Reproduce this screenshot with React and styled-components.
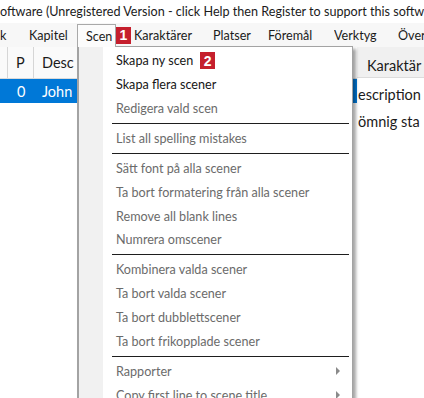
import React from "react";
import styled, { createGlobalStyle } from "styled-components";

const Global = createGlobalStyle`
  html, body { margin: 0; padding: 0; background: #fff; }
  body { width: 424px; height: 398px; overflow: hidden; font-family: Lato, "Noto Sans", sans-serif; }
`;

const Window = styled.div`
  width: 424px;
  height: 398px;
  display: flex;
  flex-direction: column;
  overflow: hidden;
  background: #fff;
`;

const TitleBar = styled.div`
  height: 23px;
  display: flex;
  align-items: center;
  font-size: 12.6px;
  color: #1b1b1b;
  white-space: nowrap;
  overflow: hidden;
  background: #fff;
`;

const MenuBar = styled.div`
  height: 24px;
  display: flex;
  align-items: stretch;
  background: #f7f7f7;
  font-size: 12.6px;
  color: #1b1b1b;
  white-space: nowrap;
`;

const BarItem = styled.div`
  flex: none;
  width: ${(p) => p.$w}px;
  padding-left: ${(p) => p.$pl || 0}px;
  box-sizing: border-box;
  display: flex;
  align-items: center;
  overflow: hidden;
`;

const OpenTab = styled(BarItem)`
  background: #fcfcfc;
  border: 1px solid #a9a9a9;
  border-bottom: none;
  margin-top: 1px;
  position: relative;
  z-index: 3;
`;

const Badge = styled.div`
  flex: none;
  width: 15px;
  height: 17px;
  background: #c51f2d;
  color: #fff;
  font-family: "Liberation Sans", Arial, sans-serif;
  font-weight: bold;
  font-size: 14px;
  display: flex;
  align-items: center;
  justify-content: center;
  align-self: center;
  margin-left: ${(p) => p.$ml || 0}px;
`;

const Body = styled.div`
  flex: 1;
  display: flex;
  position: relative;
`;

const LeftPane = styled.div`
  width: 357px;
  flex: none;
  display: flex;
  flex-direction: column;
`;

const GridRow = styled.div`
  display: flex;
  height: ${(p) => p.$h}px;
  background: ${(p) => p.$bg};
  color: ${(p) => p.$fg};
  font-size: 14.5px;
  border-bottom: ${(p) => (p.$line ? "1px solid #dadada" : "none")};
`;

const Cell = styled.div`
  flex: none;
  width: ${(p) => p.$w}px;
  box-sizing: border-box;
  padding-left: ${(p) => p.$pl || 0}px;
  display: flex;
  align-items: center;
  border-right: ${(p) => (p.$sep ? "1px solid #d6d6d6" : "none")};
  white-space: nowrap;
  overflow: hidden;
`;

const RightPane = styled.div`
  flex: 1;
  display: flex;
  flex-direction: column;
  font-size: 14.5px;
  color: #1b1b1b;
  white-space: nowrap;
  overflow: hidden;
`;

const PaneHeader = styled.div`
  height: 31px;
  box-sizing: border-box;
  padding-top: 6px;
  background: #f0f0f0;
  display: flex;
  align-items: center;
  padding-left: 10px;
  border-bottom: 1px solid #dcdcdc;
`;

const PaneLine = styled.div`
  height: 27px;
  display: flex;
  align-items: center;
  margin-left: ${(p) => p.$ml || 0}px;
  margin-top: ${(p) => p.$mt || 0}px;
`;

const Dropdown = styled.div`
  position: absolute;
  left: 77px;
  top: -1px;
  width: 276px;
  height: 400px;
  box-sizing: border-box;
  border-left: 2px solid #a3a3a3;
  border-right: 1px solid #a3a3a3;
  background: linear-gradient(to right, #f1f1f1 0, #f1f1f1 24px, #fff 24px);
  box-shadow: 3px 3px 3px rgba(0, 0, 0, 0.35);
  padding-top: 3px;
  display: flex;
  flex-direction: column;
  z-index: 2;
  font-size: 12.6px;
  &::before {
    content: "";
    position: absolute;
    top: 0;
    left: 37px;
    right: 0;
    border-top: 1px solid #a3a3a3;
  }
`;

const Item = styled.div`
  height: 23.8px;
  flex: none;
  display: flex;
  align-items: center;
  padding-left: 37px;
  padding-right: 12px;
  color: ${(p) => (p.$disabled ? "#6b6b6b" : "#161616")};
  white-space: nowrap;
`;

const Arrow = styled.span`
  margin-left: auto;
  width: 0;
  height: 0;
  border-top: 4px solid transparent;
  border-bottom: 4px solid transparent;
  border-left: 4px solid #8a8a8a;
`;

const Separator = styled.div`
  height: 6.2px;
  flex: none;
  display: flex;
  align-items: center;
  padding-left: 33px;
  padding-right: 3px;
  &::after {
    content: "";
    flex: 1;
    border-top: 1px solid #1e1e1e;
  }
`;

const menu = [
  { t: "Skapa ny scen", badge: "2" },
  { t: "Skapa flera scener" },
  { t: "Redigera vald scen", d: true },
  "sep",
  { t: "List all spelling mistakes", d: true },
  "sep",
  { t: "Sätt font på alla scener", d: true },
  { t: "Ta bort formatering från alla scener", d: true },
  { t: "Remove all blank lines", d: true },
  { t: "Numrera omscener", d: true },
  "sep",
  { t: "Kombinera valda scener", d: true },
  { t: "Ta bort valda scener", d: true },
  { t: "Ta bort dubblettscener", d: true },
  { t: "Ta bort frikopplade scener", d: true },
  "sep",
  { t: "Rapporter", d: true, sub: true },
  { t: "Copy first line to scene title", d: true, sub: true },
];

export default function App() {
  return (
    <Window>
      <Global />
      <TitleBar>oftware (Unregistered Version - click Help then Register to support this softw</TitleBar>
      <MenuBar>
        <BarItem $w={29}>k</BarItem>
        <BarItem $w={48}>Kapitel</BarItem>
        <OpenTab $w={39} $pl={8}>Scen</OpenTab>
        <Badge>1</Badge>
        <BarItem $w={82} $pl={3}>Karaktärer</BarItem>
        <BarItem $w={55}>Platser</BarItem>
        <BarItem $w={66}>Föremål</BarItem>
        <BarItem $w={64}>Verktyg</BarItem>
        <BarItem $w={26}>Över</BarItem>
      </MenuBar>
      <Body>
        <LeftPane>
          <GridRow $h={31} $bg="#fafafa" $fg="#1b1b1b" $line>
            <Cell $w={8} $sep />
            <Cell $w={26} $pl={8} $sep>P</Cell>
            <Cell $w={323} $pl={8}>Desc</Cell>
          </GridRow>
          <GridRow $h={24} $bg="#0078d7" $fg="#fff">
            <Cell $w={8} />
            <Cell $w={26} $pl={9}>0</Cell>
            <Cell $w={323} $pl={8}>John</Cell>
          </GridRow>
        </LeftPane>
        <RightPane>
          <PaneHeader>Karaktär</PaneHeader>
          <PaneLine $mt={3} $ml={1}>escription</PaneLine>
          <PaneLine $ml={1}>ömnig sta</PaneLine>
        </RightPane>
        <Dropdown>
          {menu.map((m, i) =>
            m === "sep" ? (
              <Separator key={i} />
            ) : (
              <Item key={i} $disabled={m.d}>
                {m.t}
                {m.badge && <Badge $ml={7}>{m.badge}</Badge>}
                {m.sub && <Arrow />}
              </Item>
            )
          )}
        </Dropdown>
      </Body>
    </Window>
  );
}
